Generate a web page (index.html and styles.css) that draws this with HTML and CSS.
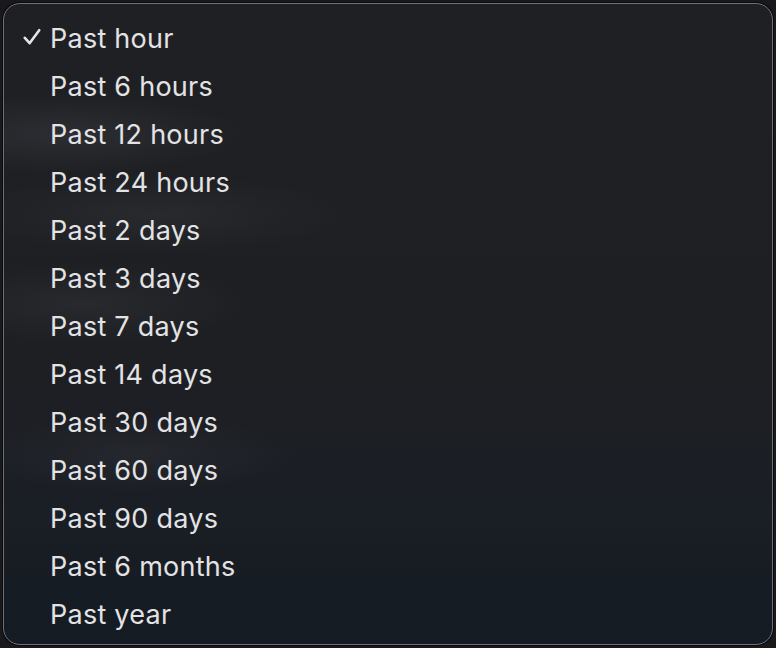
FILE: index.html
```html
<!DOCTYPE html>
<html lang="en">
<head>
<meta charset="utf-8">
<title>Time range menu</title>
<link rel="stylesheet" href="styles.css">
</head>
<body>
<div class="screen">
  <ul class="menu">
    <li class="item selected"><span class="check"><svg viewBox="0 0 18 18" width="18" height="18"><path d="M1.8 9.8 L6.6 15.2 L16.2 2.2" fill="none" stroke="#e4e4e6" stroke-width="2.6" stroke-linecap="round" stroke-linejoin="round"/></svg></span><span class="label">Past hour</span></li>
    <li class="item"><span class="check"></span><span class="label">Past 6 hours</span></li>
    <li class="item"><span class="check"></span><span class="label">Past 12 hours</span></li>
    <li class="item"><span class="check"></span><span class="label">Past 24 hours</span></li>
    <li class="item"><span class="check"></span><span class="label">Past 2 days</span></li>
    <li class="item"><span class="check"></span><span class="label">Past 3 days</span></li>
    <li class="item"><span class="check"></span><span class="label">Past 7 days</span></li>
    <li class="item"><span class="check"></span><span class="label">Past 14 days</span></li>
    <li class="item"><span class="check"></span><span class="label">Past 30 days</span></li>
    <li class="item"><span class="check"></span><span class="label">Past 60 days</span></li>
    <li class="item"><span class="check"></span><span class="label">Past 90 days</span></li>
    <li class="item"><span class="check"></span><span class="label">Past 6 months</span></li>
    <li class="item"><span class="check"></span><span class="label">Past year</span></li>
  </ul>
</div>
</body>
</html>
```

FILE: styles.css
```css
html, body {
  margin: 0;
  padding: 0;
  background: #19191c;
}
.screen {
  width: 776px;
  height: 648px;
  padding: 3px;
  box-sizing: border-box;
}
.menu {
  list-style: none;
  margin: 0;
  width: 770px;
  height: 642px;
  box-sizing: border-box;
  padding: 10px 0 0 0;
  border: 1px solid #6e7176;
  border-radius: 17px;
  box-shadow: 0 0 0 1px #0a0a0c;
  background:
    radial-gradient(ellipse 180px 40px at 60px 130px, rgba(70,72,78,0.35), transparent),
    radial-gradient(ellipse 200px 40px at 150px 210px, rgba(70,72,78,0.25), transparent),
    radial-gradient(ellipse 160px 40px at 80px 300px, rgba(70,72,78,0.25), transparent),
    radial-gradient(ellipse 160px 40px at 130px 450px, rgba(70,72,78,0.22), transparent),
    linear-gradient(to bottom, #1f2024 0%, #1e1f23 55%, #1a1e25 80%, #141b22 100%);
  font-family: "Inter", "Liberation Sans", sans-serif;
  color: #e3e3e5;
  overflow: hidden;
}
.item {
  display: flex;
  align-items: center;
  height: 48px;
  font-size: 27px;
  letter-spacing: 0.25px;
}
.check {
  width: 46px;
  display: flex;
  box-sizing: border-box;
  padding-left: 19px;
}
.check svg {
  display: block;
  position: relative;
  top: -1px;
}
.label {
  line-height: 1;
}
```
